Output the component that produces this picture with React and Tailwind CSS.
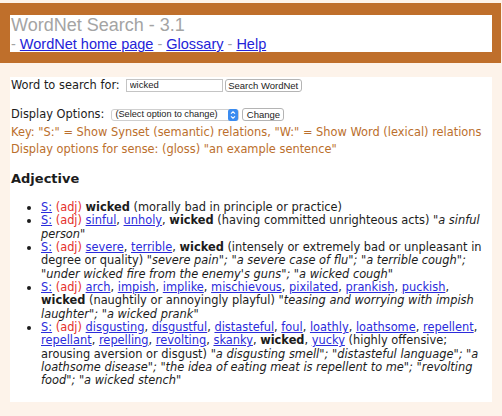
import React from 'react'

const linkCls = 'text-[#2b2bdb] underline underline-offset-[1px]'

function Words({ items }) {
  return items.map((w, i) => (
    <React.Fragment key={w}>
      {i > 0 && ', '}
      {w === 'wicked' ? <b>wicked</b> : <a href="#" className={linkCls}>{w}</a>}
    </React.Fragment>
  ))
}

const senses = [
  { words: ['wicked'], gloss: 'morally bad in principle or practice', ex: '' },
  { words: ['sinful', 'unholy', 'wicked'], gloss: 'having committed unrighteous acts', ex: '"a sinful person"' },
  {
    words: ['severe', 'terrible', 'wicked'],
    gloss: 'intensely or extremely bad or unpleasant in degree or quality',
    ex: '"severe pain"; "a severe case of flu"; "a terrible cough"; "under wicked fire from the enemy\'s guns"; "a wicked cough"',
  },
  {
    words: ['arch', 'impish', 'implike', 'mischievous', 'pixilated', 'prankish', 'puckish', 'wicked'],
    gloss: 'naughtily or annoyingly playful',
    ex: '"teasing and worrying with impish laughter"; "a wicked prank"',
  },
  {
    words: ['disgusting', 'disgustful', 'distasteful', 'foul', 'loathly', 'loathsome', 'repellent', 'repellant', 'repelling', 'revolting', 'skanky', 'wicked', 'yucky'],
    gloss: 'highly offensive; arousing aversion or disgust',
    ex: '"a disgusting smell"; "distasteful language"; "a loathsome disease"; "the idea of eating meat is repellent to me"; "revolting food"; "a wicked stench"',
  },
]

function Stepper() {
  return (
    <svg width="10" height="12" viewBox="0 0 10 12" className="shrink-0">
      <rect x="0" y="0" width="10" height="12" rx="2.5" fill="#3b8cf0" />
      <path d="M3 4.6 L5 2.8 L7 4.6 M3 7.4 L5 9.2 L7 7.4" stroke="white" strokeWidth="1.1" fill="none" />
    </svg>
  )
}

export default function App() {
  return (
    <div className="min-h-screen bg-[#fdf3ea] pt-[3px] font-['DejaVu_Sans',sans-serif] text-[#1c1c1c]">
      {/* top banner */}
      <header className="mr-px bg-[#bf6f2b] pl-[10px] pr-[9px] pt-[12px] pb-[11px]">
        <div className="bg-white pl-px font-['Liberation_Sans',Arial,sans-serif]">
          <div className="text-[18px] leading-[21px] text-[#a4a4a4]">WordNet Search - 3.1</div>
          <div className="text-[14.5px] leading-[16px] text-[#2323d8]">
            <span className="text-[#a4a4a4]">- </span>
            <a href="#" className="underline">WordNet home page</a>
            <span className="text-[#a4a4a4]"> - </span>
            <a href="#" className="underline">Glossary</a>
            <span className="text-[#a4a4a4]"> - </span>
            <a href="#" className="underline">Help</a>
          </div>
        </div>
      </header>

      <main className="ml-[10px] mr-[10px] mt-[14px] bg-white pl-px pt-[2px] pb-[14px]">
        <form className="text-[11.4px]" onSubmit={(e) => e.preventDefault()}>
          <div className="flex h-[13px] items-center">
            <span className="leading-[13px]">Word to search for:</span>
            <input
              defaultValue="wicked"
              className="ml-[6px] h-[13px] w-[97px] border border-[#c4c4c4] px-[3px] font-['Liberation_Sans',sans-serif] text-[9.5px] outline-none"
            />
            <button className="ml-[2px] h-[13px] w-[77px] rounded-[3px] border border-[#b4b4b4] bg-white font-['Liberation_Sans',sans-serif] text-[9.5px] leading-none">
              Search WordNet
            </button>
          </div>
          <div className="mt-[16px] flex h-[13px] items-center">
            <span className="leading-[13px]">Display Options:</span>
            <div className="ml-[7px] flex h-[12px] w-[128px] items-center justify-between rounded-[3px] border border-[#cfcfcf] pl-[3px] font-['Liberation_Sans',sans-serif] text-[9.2px]">
              <span>(Select option to change)</span>
              <Stepper />
            </div>
            <button className="ml-[3px] h-[13px] w-[42px] rounded-[3px] border border-[#b4b4b4] bg-white font-['Liberation_Sans',sans-serif] text-[9.5px] leading-none">
              Change
            </button>
          </div>
        </form>

        <div className="mt-[3px] text-[11.4px] leading-[17px] text-[#bb6f2d]">
          <div className="whitespace-nowrap">Key: "S:" = Show Synset (semantic) relations, "W:" = Show Word (lexical) relations</div>
          <div>Display options for sense: (gloss) "an example sentence"</div>
        </div>

        <h3 className="mt-[12px] text-[13px] font-bold leading-[17px]">Adjective</h3>

        <ul className="mt-[14px] list-disc pl-[30px] pr-[3px] text-[11.4px] leading-[13.33px]">
          {senses.map((s, i) => (
            <li key={i}>
              <a href="#" className={linkCls}>S:</a>{' '}
              <span className="text-[#e5302c]">(adj)</span>{' '}
              <Words items={s.words} /> ({s.gloss}){s.ex && ' '}
              {s.ex && <i>{s.ex}</i>}
            </li>
          ))}
        </ul>
      </main>
    </div>
  )
}
